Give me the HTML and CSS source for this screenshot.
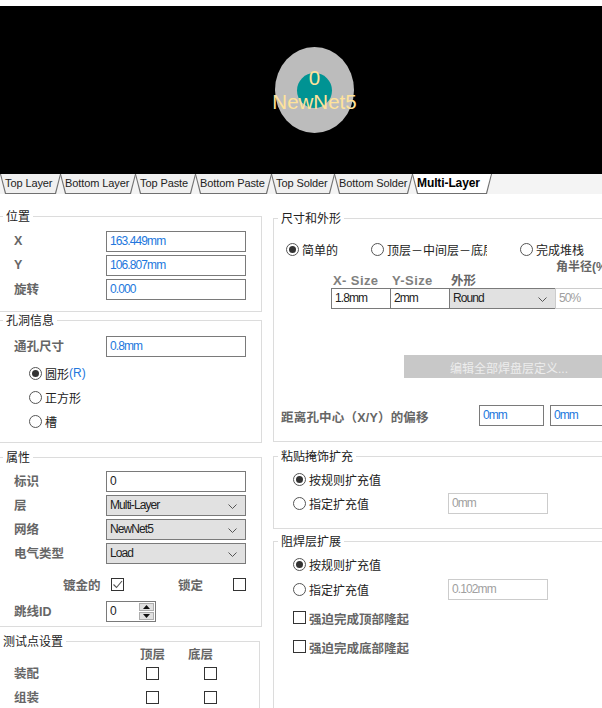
FILE: index.html
```html
<!DOCTYPE html>
<html lang="zh-CN">

<head>
  <meta charset="UTF-8">
  <meta name="viewport" content="width=device-width, initial-scale=1.0">
  <title>焊盘</title>
  <link rel="stylesheet" href="styles.css">
</head>

<body>
  <div class="board">
    <div class="pad">
      <div class="hole"></div>
      <span class="pad-num">0</span>
      <span class="pad-net">NewNet5</span>
    </div>
  </div>

  <div class="tabs">
    <div class="tab w61">Top Layer</div>
    <div class="tab w76">Bottom Layer</div>
    <div class="tab w61">Top Paste</div>
    <div class="tab w77">Bottom Paste</div>
    <div class="tab w64">Top Solder</div>
    <div class="tab w79">Bottom Solder</div>
    <div class="tab active w80">Multi-Layer</div>
  </div>

  <div class="main">
    <div class="col-left">
      <fieldset class="g-pos">
        <legend>位置</legend>
        <div class="row"><span class="lbl">X</span><div class="field blue">163.449mm</div></div>
        <div class="row"><span class="lbl">Y</span><div class="field blue">106.807mm</div></div>
        <div class="row"><span class="lbl">旋转</span><div class="field blue">0.000</div></div>
      </fieldset>

      <fieldset class="g-hole">
        <legend>孔洞信息</legend>
        <div class="row"><span class="lbl">通孔尺寸</span><div class="field blue">0.8mm</div></div>
        <div class="radios">
          <div class="opt"><span class="radio on"></span>圆形<span class="blue">(R)</span></div>
          <div class="opt"><span class="radio"></span>正方形</div>
          <div class="opt"><span class="radio"></span>槽</div>
        </div>
      </fieldset>

      <fieldset class="g-attr">
        <legend>属性</legend>
        <div class="row"><span class="lbl">标识</span><div class="field">0</div></div>
        <div class="row"><span class="lbl">层</span>
          <div class="field select">Multi-Layer
            <svg class="chev" width="9" height="5" viewBox="0 0 9 5"><path d="M0.5 0.5 L4.5 4.5 L8.5 0.5" fill="none" stroke="#555"/></svg>
          </div>
        </div>
        <div class="row"><span class="lbl">网络</span>
          <div class="field select">NewNet5
            <svg class="chev" width="9" height="5" viewBox="0 0 9 5"><path d="M0.5 0.5 L4.5 4.5 L8.5 0.5" fill="none" stroke="#555"/></svg>
          </div>
        </div>
        <div class="row"><span class="lbl">电气类型</span>
          <div class="field select">Load
            <svg class="chev" width="9" height="5" viewBox="0 0 9 5"><path d="M0.5 0.5 L4.5 4.5 L8.5 0.5" fill="none" stroke="#555"/></svg>
          </div>
        </div>
        <div class="checks">
          <span class="lbl plated">镀金的</span>
          <span class="check">
            <svg width="11" height="11" viewBox="0 0 11 11"><path d="M1.5 5.5 L4.5 8.5 L10 2" fill="none" stroke="#555" stroke-width="1.1"/></svg>
          </span>
          <span class="lbl locked">锁定</span>
          <span class="check"></span>
        </div>
        <div class="row spin-row"><span class="lbl">跳线ID</span>
          <div class="field spin"><span>0</span>
            <div class="spin-btns">
              <span class="spin-btn"><svg width="7" height="4" viewBox="0 0 7 4"><path d="M3.5 0 L7 4 L0 4 Z" fill="#111"/></svg></span>
              <span class="spin-btn"><svg width="7" height="4" viewBox="0 0 7 4"><path d="M0 0 L7 0 L3.5 4 Z" fill="#111"/></svg></span>
            </div>
          </div>
        </div>
      </fieldset>

      <fieldset class="g-test">
        <legend>测试点设置</legend>
        <div class="test-head"><span class="lbl">顶层</span><span class="lbl">底层</span></div>
        <div class="test-row"><span class="lbl">装配</span><span class="check c1"></span><span class="check c2"></span></div>
        <div class="test-row"><span class="lbl">组装</span><span class="check c1"></span><span class="check c2"></span></div>
      </fieldset>
    </div>

    <div class="col-right">
      <fieldset class="g-size">
        <legend>尺寸和外形</legend>
        <div class="modes">
          <div class="opt m1"><span class="radio on"></span>简单的</div>
          <div class="opt m2"><span class="radio"></span><span class="clip">顶层－中间层－底层</span></div>
          <div class="opt m3"><span class="radio"></span>完成堆栈</div>
        </div>
        <div class="corner-row"><span class="lbl">角半径(%)</span></div>
        <div class="size-head">
          <span class="lbl h1">X- Size</span>
          <span class="lbl h2">Y-Size</span>
          <span class="lbl h3">外形</span>
        </div>
        <div class="size-cells">
          <div class="field c-x">1.8mm</div>
          <div class="field c-y">2mm</div>
          <div class="field select c-s">Round
            <svg class="chev" width="9" height="5" viewBox="0 0 9 5"><path d="M0.5 0.5 L4.5 4.5 L8.5 0.5" fill="none" stroke="#555"/></svg>
          </div>
          <div class="field off c-r">50%</div>
        </div>
        <button class="edit-btn">编辑全部焊盘层定义...</button>
        <div class="offset-row">
          <span class="lbl offset-lbl">距离孔中心（X/Y）的偏移</span>
          <div class="field blue o1">0mm</div>
          <div class="field blue o2">0mm</div>
        </div>
      </fieldset>

      <fieldset class="g-paste">
        <legend>粘贴掩饰扩充</legend>
        <div class="opt ex"><span class="radio on"></span>按规则扩充值</div>
        <div class="ex-row">
          <div class="opt ex"><span class="radio"></span>指定扩充值</div>
          <div class="field off ex-field">0mm</div>
        </div>
      </fieldset>

      <fieldset class="g-solder">
        <legend>阻焊层扩展</legend>
        <div class="opt ex"><span class="radio on"></span>按规则扩充值</div>
        <div class="ex-row">
          <div class="opt ex"><span class="radio"></span>指定扩充值</div>
          <div class="field off ex-field">0.102mm</div>
        </div>
        <div class="opt ex force1"><span class="check"></span><span class="lbl force-lbl">强迫完成顶部隆起</span></div>
        <div class="opt ex force2"><span class="check"></span><span class="lbl force-lbl">强迫完成底部隆起</span></div>
      </fieldset>
    </div>
  </div>
</body>

</html>
```

FILE: styles.css
```css
* {
  box-sizing: border-box;
}

html,
body {
  width: 100%;
  height: 708px;
  margin: 0;
  overflow: hidden;
  background-color: #fff;
}

body {
  font-family: "Liberation Sans", "Noto Sans CJK SC", sans-serif;
  font-size: 12px;
  color: #222;
}

/* preview */
.board {
  position: relative;
  height: 168px;
  margin-top: 6px;
  background-color: #000;
}

.pad {
  position: absolute;
  left: 275px;
  top: 41px;
  width: 79px;
  height: 86px;
  border-radius: 50%;
  background-color: #bcbcbc;
}

.hole {
  position: absolute;
  left: 22px;
  top: 26px;
  width: 35px;
  height: 35px;
  border-radius: 50%;
  background-color: #009393;
}

.pad-num,
.pad-net {
  position: absolute;
  left: -10px;
  right: -10px;
  text-align: center;
  font-size: 20.5px;
  line-height: 20px;
  color: #ffe39b;
}

.pad-num {
  top: 21px;
}

.pad-net {
  top: 45px;
}

/* layer tabs */
.tabs {
  position: relative;
  z-index: 0;
  display: flex;
  height: 20px;
  background-color: #f4f4f4;
  background-image: radial-gradient(#e4e4e4 0.5px, transparent 0.6px);
  background-size: 2px 2px;
}

.tab {
  position: relative;
  height: 20px;
  margin-right: -1px;
  padding-left: 5px;
  font-size: 11px;
  line-height: 18px;
  letter-spacing: -0.1px;
  white-space: nowrap;
  color: #222;
}

.tab::before,
.tab::after {
  content: "";
  position: absolute;
  z-index: -1;
  clip-path: polygon(0 0, 100% 0, calc(100% - 5px) 100%, 5px 100%);
}

.tab::before {
  inset: 0 0 0 0;
  background-color: #707070;
}

.tab::after {
  inset: 0 1px 1px 1px;
  background-color: #f0f0f0;
}

.tab.active {
  font-size: 12px;
  font-weight: bold;
  color: #000;
}

.tab.active::after {
  background-color: #fff;
}

.w61 {
  width: 61px;
}

.w64 {
  width: 64px;
}

.w76 {
  width: 76px;
}

.w77 {
  width: 77px;
}

.w79 {
  width: 79px;
}

.w80 {
  width: 80px;
}

/* columns */
.main {
  display: grid;
  grid-template-columns: 263px 360px;
  column-gap: 11px;
  margin-left: -1px;
}

fieldset {
  margin: 0;
  padding: 0;
  min-width: 0;
  border: 1px solid #dcdcdc;
}

legend {
  height: 16px;
  margin-left: 3px;
  padding: 0 3px;
  font-size: 12px;
  line-height: 19px;
  color: #222;
}

.lbl {
  font-weight: bold;
  font-size: 12.5px;
  color: #666;
  white-space: nowrap;
}

.blue {
  color: #2277dd;
}

/* left column */
.col-left {
  padding-top: 14px;
}

.row {
  display: flex;
  align-items: center;
  height: 21px;
  margin-top: 3px;
  padding-left: 14px;
}

.row .lbl {
  width: 92px;
  padding-bottom: 2px;
}

.field {
  position: relative;
  width: 140px;
  height: 21px;
  padding-left: 3px;
  border: 1px solid #7a7a7a;
  background-color: #fff;
  font-size: 12px;
  letter-spacing: -0.9px;
  line-height: 18px;
  white-space: nowrap;
  overflow: hidden;
}

.select {
  background-color: #e1e1e1;
}

.chev {
  position: absolute;
  right: 8px;
  top: 8px;
}

.off {
  border-color: #ccc;
  color: #a0a0a0;
}

.opt {
  display: flex;
  align-items: center;
  height: 24px;
  white-space: nowrap;
  font-size: 12px;
}

.radio {
  position: relative;
  flex: none;
  width: 13px;
  height: 13px;
  margin-right: 3px;
  border: 1px solid #555;
  border-radius: 50%;
  background-color: #fff;
}

.radio.on::after {
  content: "";
  position: absolute;
  left: 2px;
  top: 2px;
  width: 7px;
  height: 7px;
  border-radius: 50%;
  background-color: #333;
}

.check {
  display: inline-flex;
  flex: none;
  width: 13px;
  height: 13px;
  border: 1px solid #333;
  background-color: #fff;
}

.g-pos {
  padding-bottom: 11px;
}

.g-pos .row:first-of-type {
  margin-top: 7px;
}

.g-hole .row:first-of-type {
  margin-top: 8px;
}

.g-hole {
  padding-bottom: 9px;
}

.radios {
  margin-top: 4px;
  padding-left: 29px;
}

.g-attr {
  margin-top: 6px;
  padding-bottom: 4px;
}

.g-attr .row:first-of-type {
  margin-top: 6px;
}

.checks {
  display: flex;
  align-items: center;
  height: 20px;
  margin-top: 10px;
  padding-left: 63px;
}

.plated {
  width: 48px;
}

.locked {
  width: 55px;
  margin-left: 54px;
}

.spin-row {
  margin-top: 7px;
}

.spin {
  display: flex;
  width: 50px;
}

.spin-btns {
  display: flex;
  flex-direction: column;
  gap: 1px;
  margin: 1px 1px 1px auto;
}

.spin-btn {
  display: flex;
  align-items: center;
  justify-content: center;
  width: 15px;
  height: 8px;
  background-color: #e1e1e1;
  border: 1px solid #adadad;
}

.g-test {
  margin-top: 6px;
  margin-right: 2px;
  height: 90px;
  border-bottom: none;
}

.g-test legend {
  margin-left: 0;
}

.test-head {
  display: flex;
  gap: 23px;
  height: 14px;
  margin-top: -1px;
  margin-bottom: -1px;
  padding-left: 140px;
  line-height: 14px;
}

.test-row {
  display: flex;
  align-items: center;
  height: 24px;
  padding-left: 14px;
}

.test-row .lbl {
  width: 132px;
  padding-bottom: 2px;
}

.test-row .c2 {
  margin-left: 45px;
}

/* right column */
.col-right {
  padding-top: 16px;
}

.col-right legend {
  margin-left: 4px;
}

.g-size {
  padding-bottom: 15px;
}

.modes {
  display: flex;
  height: 20px;
  margin-top: 13px;
  padding-left: 12px;
}

.modes .opt {
  height: 20px;
}

.m1 {
  width: 85px;
}

.m2 {
  width: 149px;
}

.clip {
  width: 100px;
  overflow: hidden;
}

.corner-row {
  height: 15px;
  padding-left: 282px;
  line-height: 17px;
}

.corner-row .lbl {
  font-size: 12px;
}

.size-head {
  display: flex;
  height: 14px;
  line-height: 14px;
}

.h1 {
  width: 59px;
  margin-left: 59px;
  font-size: 13px;
  letter-spacing: 0.4px;
  color: #80807e;
}

.h2 {
  width: 59px;
  font-size: 13px;
  letter-spacing: 0.4px;
  color: #80807e;
}

.size-cells {
  display: flex;
  height: 21px;
  margin-left: 57px;
}

.c-x,
.c-y {
  width: 60px;
  margin-right: -1px;
}

.c-s {
  width: 107px;
  margin-right: -1px;
}

.c-r {
  width: 60px;
}

.edit-btn {
  display: block;
  width: 220px;
  height: 23px;
  margin: 46px 0 0 130px;
  padding: 2px 0 0 46px;
  border: none;
  background-color: #c8c8c8;
  color: #ededed;
  font: inherit;
  text-align: left;
}

.offset-row {
  display: flex;
  align-items: center;
  height: 21px;
  margin-top: 27px;
  padding-left: 7px;
}

.offset-lbl {
  width: 198px;
  letter-spacing: 0.2px;
  padding-top: 1px;
}

.o1 {
  width: 65px;
  flex: none;
}

.o2 {
  width: 65px;
  flex: none;
  margin-left: 6px;
}

.ex {
  height: 20px;
  padding-left: 19px;
}

.ex-row {
  display: flex;
  align-items: center;
  height: 21px;
}

.ex-field {
  width: 100px;
  margin-left: auto;
  margin-right: 84px;
}

.g-paste {
  margin-top: 6px;
  padding-bottom: 14px;
}

.g-paste > .opt:first-of-type {
  margin-top: 5px;
}

.g-paste .ex-row {
  margin-top: 4px;
}

.g-solder {
  margin-top: 4px;
  height: 200px;
}

.g-solder > .opt:first-of-type {
  margin-top: 5px;
}

.g-solder .ex-row {
  margin-top: 5px;
}

.force1 {
  margin-top: 7px;
}

.force2 {
  margin-top: 9px;
}

.force1 .check,
.force2 .check {
  margin-right: 3px;
}

.force-lbl {
  padding-top: 2px;
}
```
